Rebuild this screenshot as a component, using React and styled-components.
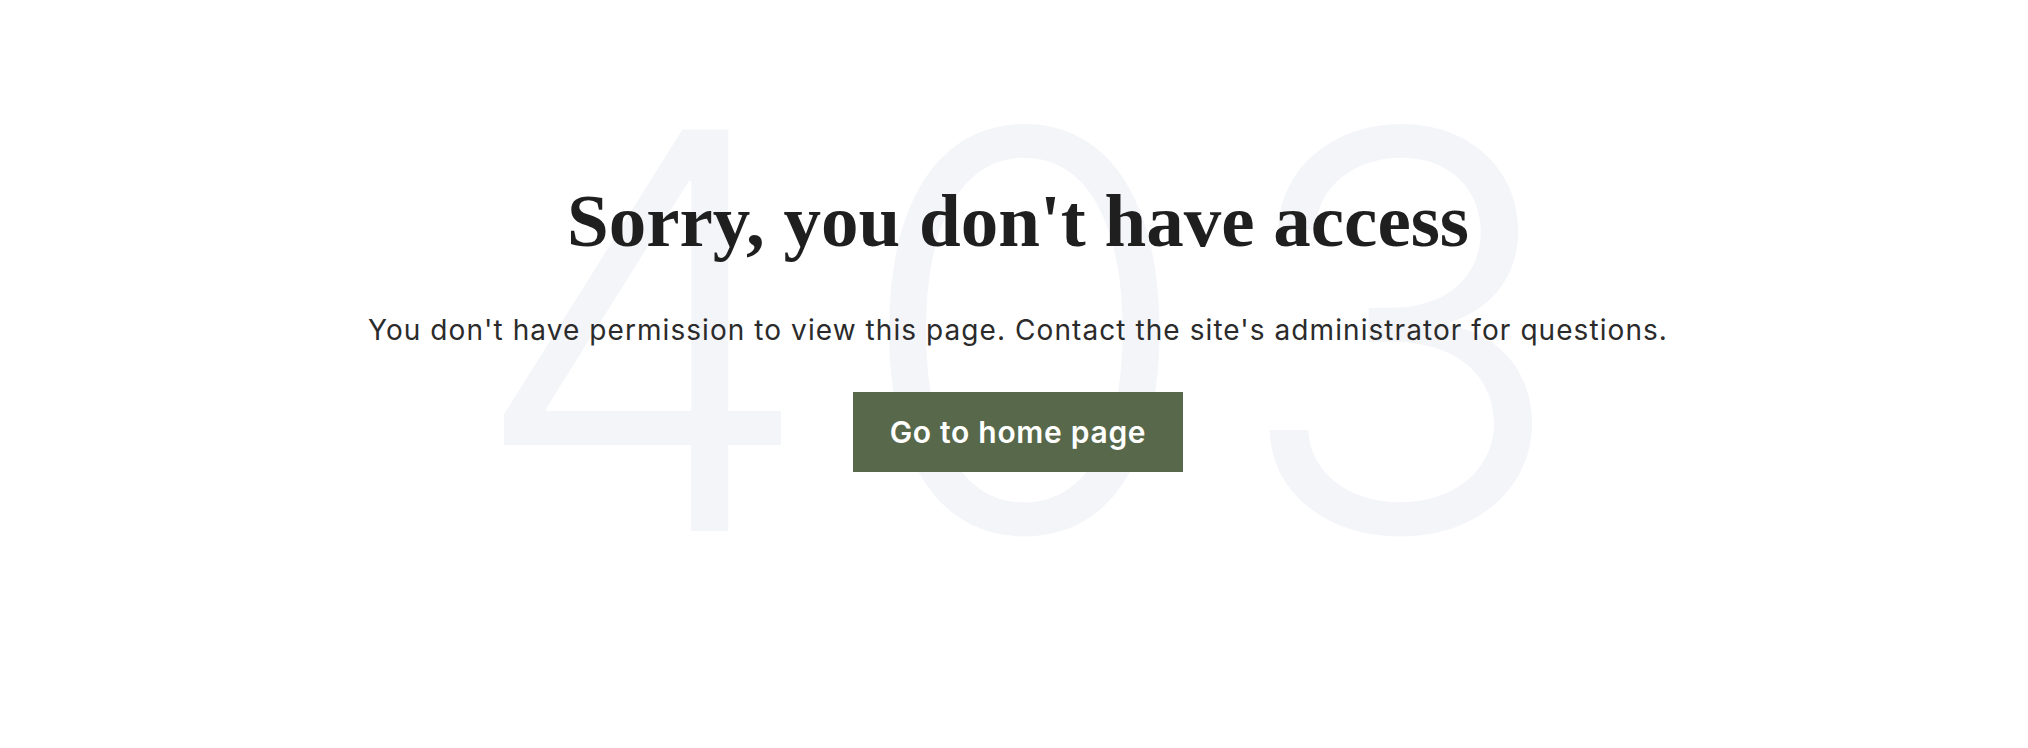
import React from "react";
import styled, { createGlobalStyle } from "styled-components";

const GlobalStyle = createGlobalStyle`
  html, body {
    margin: 0;
    padding: 0;
    background: #ffffff;
  }
  body {
    font-family: Inter, "Liberation Sans", sans-serif;
    -webkit-font-smoothing: antialiased;
  }
  * { box-sizing: border-box; }
`;

const Page = styled.main`
  width: 100%;
  min-height: 748px;
  padding-left: 8px;
  background: #ffffff;
`;

const Stage = styled.section`
  display: grid;
  height: 660px;
  justify-items: center;
  overflow: hidden;
`;

const BigCode = styled.div`
  grid-area: 1 / 1;
  align-self: center;
  font-family: Inter, "Liberation Sans", sans-serif;
  font-weight: 300;
  font-size: 552px;
  line-height: 1;
  color: #f4f5f9;
  letter-spacing: 38px;
  padding-left: 38px;
  user-select: none;
`;

const Content = styled.div`
  grid-area: 1 / 1;
  align-self: start;
  padding-top: 176px;
  display: flex;
  flex-direction: column;
  align-items: center;
  position: relative;
`;

const Title = styled.h1`
  margin: 0;
  font-family: "Liberation Serif", "DejaVu Serif", serif;
  font-weight: 700;
  font-size: 75px;
  line-height: 1.2;
  color: #1f1f1f;
`;

const Message = styled.p`
  margin: 45px 0 0;
  font-family: Inter, "Liberation Sans", sans-serif;
  font-weight: 400;
  font-size: 28px;
  letter-spacing: 1.07px;
  line-height: 1.4;
  color: #2b2b2b;
  white-space: nowrap;
`;

const HomeButton = styled.a`
  margin-top: 42px;
  display: inline-flex;
  align-items: center;
  justify-content: center;
  height: 80px;
  padding: 0 37px;
  background: #57684b;
  color: #ffffff;
  font-family: Inter, "Liberation Sans", sans-serif;
  font-weight: 600;
  font-size: 30px;
  letter-spacing: 0.7px;
  text-decoration: none;
  cursor: pointer;
`;

export default function App() {
  return (
    <>
      <GlobalStyle />
      <Page>
        <Stage>
          <BigCode aria-hidden="true">403</BigCode>
          <Content>
            <Title>Sorry, you don't have access</Title>
            <Message>
              You don't have permission to view this page. Contact the site's administrator for questions.
            </Message>
            <HomeButton href="#">Go to home page</HomeButton>
          </Content>
        </Stage>
      </Page>
    </>
  );
}
